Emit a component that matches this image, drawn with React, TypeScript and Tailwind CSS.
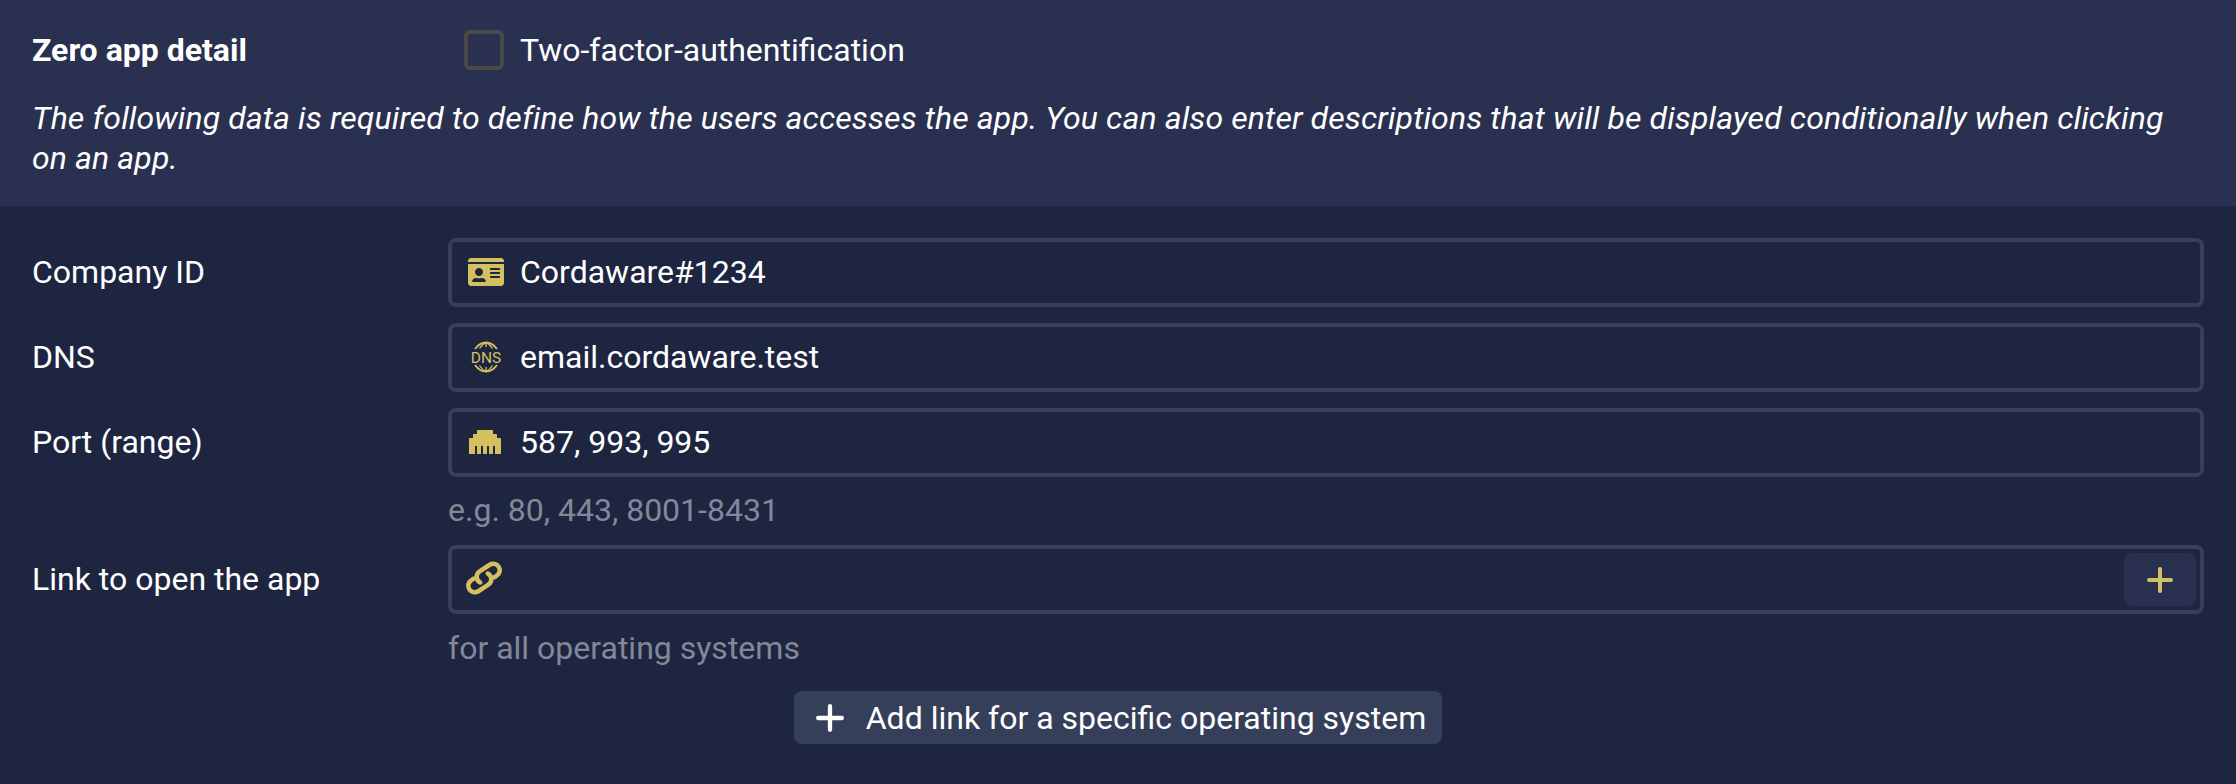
import React from "react";
import { FaIdCard, FaEthernet } from "react-icons/fa";

const gold = "text-[#d5c060]";

function Dns() {
  return (
    <svg viewBox="0 0 32 32" className="w-8 h-8 shrink-0" fill="none" stroke="#d5c060" strokeWidth="1.800">
      <path d="M5 8C8 3.800 11.500 1.500 16 1.500S24 3.800 27 8" />
      <path d="M9.500 7.500C11 5 13 3 16 1.500 19 3 21 5 22.500 7.500M16 1.500V6" strokeWidth="1.300" />
      <path d="M5 24C8 28.200 11.500 30.500 16 30.500S24 28.200 27 24" />
      <path d="M9.500 24.500C11 27 13 29 16 30.500 19 29 21 27 22.500 24.500M16 30.500V26" strokeWidth="1.300" />
      <text x="16" y="21.500" textAnchor="middle" fontFamily="Roboto, sans-serif" fontWeight="400" fontSize="15.500" fill="#d5c060" stroke="none">DNS</text>
    </svg>
  );
}

function LinkIcon() {
  return (
    <svg viewBox="0 0 48 40" className="w-12 h-10 shrink-0" fill="none" stroke="#d5c060" strokeWidth="4.500" strokeLinecap="round">
      <g transform="translate(22 19) rotate(-33)">
        <path d="M-9 -5H-12A6.500 6.500 0 0 0 -12 8H0A6.500 6.500 0 0 0 5.600 -1.750" />
        <path d="M9 5H12A6.500 6.500 0 0 0 12 -8H0A6.500 6.500 0 0 0 -5.600 1.750" />
      </g>
    </svg>
  );
}

function Plus({ className }: { className: string }) {
  return (
    <svg viewBox="0 0 26 26" className={className} fill="none" stroke="currentColor" strokeWidth="4" strokeLinecap="round">
      <path d="M13 2v22M2 13h22" />
    </svg>
  );
}

function Field({ label, icon, value, action }: { label: string; icon: React.ReactNode; value?: string; action?: React.ReactNode }) {
  return (
    <div className="grid grid-cols-[416px_1fr] items-center">
      <div className="pb-[2px]">{label}</div>
      <div className="h-[69px] border-4 border-[#393f5a] rounded-lg flex items-center pl-[14px] pr-1">
        <div className="w-10 flex justify-center shrink-0 pb-[2px]">{icon}</div>
        <div className="ml-[14px] flex-1 pb-[1px]">{value}</div>
        {action}
      </div>
    </div>
  );
}

function Hint({ children, className }: { children: React.ReactNode; className: string }) {
  return <div className={`grid grid-cols-[416px_1fr] items-center ${className}`}><div /><div className="text-[#838899] pb-[2px]">{children}</div></div>;
}

export default function App() {
  return (
    <div className="w-[2236px] h-[784px] bg-[#1e2540] text-white text-[32px] leading-10 font-['Roboto',sans-serif]">
      <div className="h-[206px] bg-[#2a3150] px-8 pt-[30px]">
        <div className="flex items-center h-10">
          <div className="w-[432px] font-bold">Zero app detail</div>
          <div className="w-10 h-10 border-4 border-[#4a4848] rounded-md" />
          <div className="ml-4">Two-factor-authentification</div>
        </div>
        <div className="mt-[28px] italic tracking-[0.12px] pr-[30px]">
          The following data is required to define how the users accesses the app. You can also enter descriptions that will be displayed conditionally when clicking on an app.
        </div>
      </div>
      <div className="px-8 pt-8">
        <div className="flex flex-col gap-4">
          <Field label="Company ID" icon={<FaIdCard className={`w-9 h-[32px] ${gold}`} />} value="Cordaware#1234" />
          <Field label="DNS" icon={<Dns />} value="email.cordaware.test" />
          <Field label="Port (range)" icon={<FaEthernet className={`w-8 h-8 -ml-[2px] ${gold}`} />} value="587, 993, 995" />
        </div>
        <Hint className="h-[68px]">e.g. 80, 443, 8001-8431</Hint>
        <Field
          label="Link to open the app"
          icon={<LinkIcon />}
          action={
            <div className="w-[72px] h-[53px] bg-[#2a3150] rounded-lg flex items-center justify-center">
              <Plus className={`w-[26px] h-[26px] ${gold}`} />
            </div>
          }
        />
        <Hint className="h-[70px]">for all operating systems</Hint>
        <div className="flex justify-center mt-[7px]">
          <button className="h-[53px] bg-[#363f5a] rounded-lg flex items-center pl-[22px] pr-[16px]">
            <Plus className="w-[28px] h-[28px] text-white" />
            <span className="ml-[22px]">Add link for a specific operating system</span>
          </button>
        </div>
      </div>
    </div>
  );
}
